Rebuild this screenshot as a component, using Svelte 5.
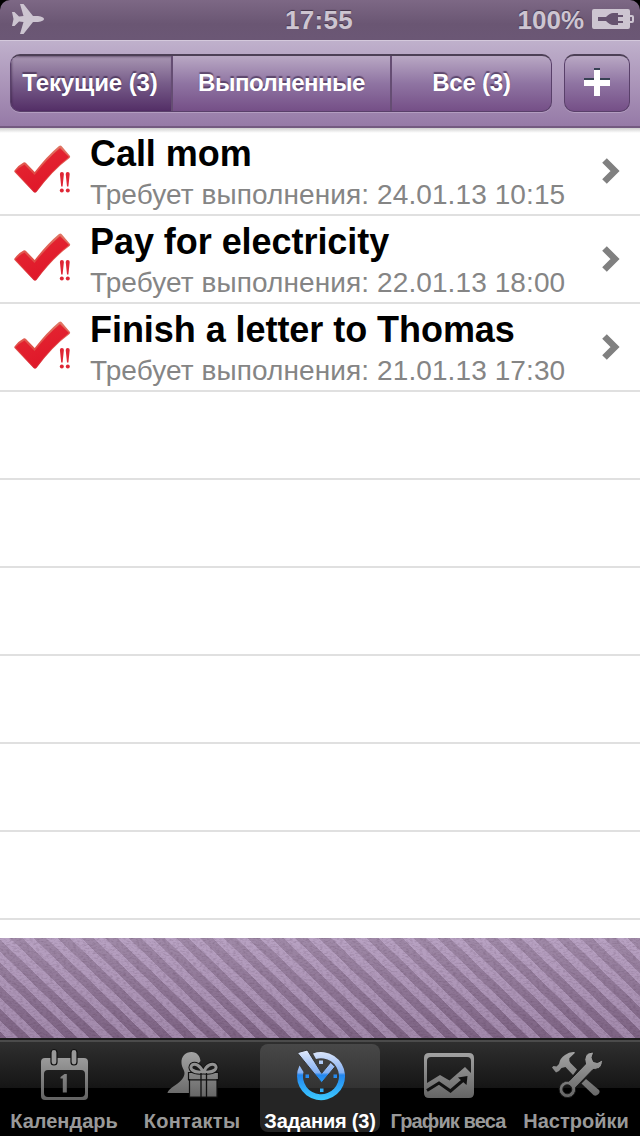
<script lang="ts">
  let filter = 0;
  let activeTab = 2;

  const filters = ['Текущие (3)', 'Выполненные', 'Все (3)'];

  const tasks = [
    { title: 'Call mom', due: '24.01.13 10:15' },
    { title: 'Pay for electricity', due: '22.01.13 18:00' },
    { title: 'Finish a letter to Thomas', due: '21.01.13 17:30' }
  ];

  const emptyRows = [1, 2, 3, 4, 5, 6];

  const tabs = [
    { id: 'calendar', label: 'Календарь' },
    { id: 'contacts', label: 'Контакты' },
    { id: 'tasks', label: 'Задания (3)' },
    { id: 'weight', label: 'График веса' },
    { id: 'settings', label: 'Настройки' }
  ];
</script>

<div class="screen">
  <header class="status">
    <svg class="plane" width="34" height="32" viewBox="0 0 34 32">
      <path d="M1 9h2.500l4.500 4.500 4.500-.5L9 1h3.500L22 13h5q6 .8 6 3t-6 3h-5L12.500 31H9l3.500-12-4.500-.5L3.500 23H1l1.500-7z" />
    </svg>
    <span class="time">17:55</span>
    <div class="power">
      <span class="percent">100%</span>
      <svg width="43" height="22" viewBox="0 0 43 22">
        <path class="cell" fill-rule="evenodd" d="M2 1h34q2 0 2 2v4h2q2 0 2 2v4q0 2-2 2h-2v4q0 2-2 2H2q-2 0-2-2V3q0-2 2-2zM38 9v4h2V9z" />
        <path class="plug" d="M6 9h8q4-4 7-4h5v2h5v2h-5v4h5v2h-5v2h-5q-3 0-7-4H6z" />
      </svg>
    </div>
  </header>

  <nav class="toolbar">
    <div class="segments">
      {#each filters as name, i}
        <button class="segment" class:selected={filter === i} on:click={() => (filter = i)}>{name}</button>
      {/each}
    </div>
    <button class="add" aria-label="Добавить">
      <svg width="28" height="30" viewBox="0 0 28 30">
        <path class="under" d="M11 0h6v10h10v6H1v-6h10z" />
        <path class="plus" d="M11 2h6v10h10v6H17v10h-6V18H1v-6h10z" />
      </svg>
    </button>
  </nav>

  <main class="list">
    {#each tasks as task}
      <div class="row">
        <svg class="check" width="90" height="86" viewBox="0 0 90 86">
          <defs>
            <linearGradient id="red" x1="0" y1="0" x2="0.5" y2="1">
              <stop offset="0" stop-color="#e5604f" />
              <stop offset="0.4" stop-color="#e3222f" />
              <stop offset="1" stop-color="#df1629" />
            </linearGradient>
            <linearGradient id="edge" x1="0" y1="0" x2="0" y2="1">
              <stop offset="0" stop-color="#e07866" />
              <stop offset="0.6" stop-color="#e04a45" />
              <stop offset="1" stop-color="#d8202f" />
            </linearGradient>
          </defs>
          <path fill="url(#edge)" d="M14.500 42.500q4-5.500 9-8 1.500-.5 2.500.5l8.700 9Q47 28 59 18q1.500-1 2.500 0l8.500 10q.5 1-.5 2Q53 42 36.500 64q-1.500 1.500-3 0L14.500 44q-.5-.8 0-1.500z" />
          <path fill="url(#red)" d="M15.500 43.500q4-4.500 9-7l10 10.500Q47 31 60 20l9 9Q52 42 35 64z" />
          <path class="mark" d="M59.900 46q0-2 2-2t2 2l-1.300 12.500h-1.400zM65.700 46q0-2 2-2t2 2l-1.300 12.500H67z" />
          <circle class="mark" cx="61.800" cy="62.500" r="2" />
          <circle class="mark" cx="67.800" cy="62.500" r="2" />
        </svg>
        <div class="text">
          <div class="title">{task.title}</div>
          <div class="due">Требует выполнения: {task.due}</div>
        </div>
        <svg class="chevron" width="20" height="28" viewBox="0 0 20 28">
          <path d="M3.500 3.500L14 14 3.500 24.500" />
        </svg>
      </div>
    {/each}
    {#each emptyRows as n}
      <div class="row"></div>
    {/each}
  </main>

  <div class="banner">
    <svg width="640" height="100">
      <defs>
        <filter id="grain" x="0" y="0" width="100%" height="100%" color-interpolation-filters="sRGB">
          <feTurbulence type="fractalNoise" baseFrequency="0.3 0.6" numOctaves="2" seed="4" />
          <feColorMatrix values="0 0 0 0 0.2  0 0 0 0 0.1  0 0 0 0 0.2  0.4 0 0 0 -0.17" />
        </filter>
      </defs>
      <rect width="640" height="100" filter="url(#grain)" />
    </svg>
  </div>

  <footer class="tabs">
    <svg class="defs" width="0" height="0">
      <defs>
        <linearGradient id="grey" gradientUnits="userSpaceOnUse" x1="0" y1="2" x2="0" y2="52">
          <stop offset="0" stop-color="#a6a6a6" />
          <stop offset="1" stop-color="#626262" />
        </linearGradient>
        <linearGradient id="blue" gradientUnits="userSpaceOnUse" x1="0" y1="2" x2="0" y2="52">
          <stop offset="0" stop-color="#e3eafb" />
          <stop offset="0.45" stop-color="#84b0f3" />
          <stop offset="0.5" stop-color="#2386ef" />
          <stop offset="1" stop-color="#3ccaff" />
        </linearGradient>
      </defs>
    </svg>
    {#each tabs as tab, i}
      <button class="tab" class:active={activeTab === i} on:click={() => (activeTab = i)}>
        <svg class="icon" width="56" height="56" viewBox="0 0 56 56">
          {#if tab.id === 'calendar'}
            <path fill="url(#grey)" fill-rule="evenodd" d="M9 10h39q4 0 4 4v34q0 4-4 4H9q-4 0-4-4V14q0-4 4-4zM12 22q-4 0-4 4v19q0 4 4 4h33q4 0 4-4V26q0-4-4-4z" />
            <rect class="ring" x="15" y="1.500" width="6" height="15.500" rx="3" />
            <rect class="ring" x="35" y="1.500" width="6" height="15.500" rx="3" />
            <path fill="url(#grey)" d="M24.500 29l4-3h2.300v18.500h-4V30.500h-2.300z" />
          {:else if tab.id === 'contacts'}
            <path fill="url(#grey)" d="M27.500 4c-6 0-10.500 4.500-10 11 .3 5 3 7 3 10 0 4-3 8-9 12-4 2.800-7.500 5-8 8h24V24l9-11C36 8 33 4 27.500 4z" />
            <path class="gift" d="M24.500 24.500h30v7h-1.500V49H25.500V31.500h-1z" />
            <path class="bow under-bow" d="M39 24c-3-7-8-9-11-7-3 3 0 8 11 7zM40 24c2-7 8-9 11-7 3 3 0 8-11 7z" />
            <path class="bow" d="M39 24c-3-7-8-9-11-7-3 3 0 8 11 7zM40 24c2-7 8-9 11-7 3 3 0 8-11 7z" />
            <path class="seam" d="M24 31.800h31M37 25v24M42.500 25v24" />
          {:else if tab.id === 'tasks'}
            <path fill="url(#blue)" d="M21 5.500A24 24 0 1 1 7.500 17.500L11.500 24A18 18 0 1 0 24 11z" />
            <path class="cut" fill="url(#blue)" d="M5.300 4.700L15.300 2l14.400 23.300 9-11 4.300 4.400-13.300 16z" />
            <path fill="url(#blue)" d="M27 12.500h4v3.500h-4zM13.500 26.500h3.500v3.500h-3.500zM41.500 26.500H45v3.500h-3.500zM28 40.500h3.500V44H28z" />
          {:else if tab.id === 'weight'}
            <path fill="url(#grey)" fill-rule="evenodd" d="M9 5h40q5 0 5 5v35q0 5-5 5H9q-5 0-5-5V10q0-5 5-5zM11 9q-4 0-4 4v22l13-8 9.500 5.500L45 19l6 6V13q0-4-4-4z" />
            <path class="graph" d="M7 42.500l12-7.500L30.500 43 44 31.500" />
            <path class="arrow" d="M38 29.500l9.500-1.500-1 9z" />
          {:else}
            <path fill="url(#grey)" d="M4 19.500l1.500-1.500 3 .5L11 16q1-6 6-9 4.500-3.500 9.500-3l.3 1-5.500 5.300q-.5 2.500 1.200 4.700l6.500 6.500-4 5.500-7.500-8-4 1-2.500 3-3 1.500z" />
            <path fill="url(#grey)" d="M33.500 35.500l4.500-4.500 13 11q1.500 2-.8 4.300t-4.500 1z" />
            <path class="tool" fill="url(#grey)" fill-rule="evenodd" d="M44.500 4l1 1-1.500 4.500 1.500 4 4 1 4-2.200 1 1Q54 19 50.500 20.500q-3 1.200-5.500 1L27.500 39.500a8.300 8.300 0 1 1-6.500-6.300L37.500 16q-1.500-5 0-8 2-4 7-4zM19.300 36.800a4.500 4.500 0 1 0 0 9a4.500 4.500 0 0 0 0-9z" />
          {/if}
        </svg>
        <span class="label {tab.id}">{tab.label}</span>
      </button>
    {/each}
  </footer>
</div>

<style>
  :global(body) {
    background: #000;
  }

  .screen {
    display: flex;
    flex-direction: column;
    width: 640px;
    height: 1136px;
    overflow: hidden;
    background: #000;
    font-family: 'Liberation Sans', Arial, sans-serif;
  }

  button {
    padding: 0;
    border: none;
    background: none;
    font-family: inherit;
    cursor: pointer;
  }

  svg {
    display: block;
    flex: none;
  }

  .status {
    display: grid;
    grid-template-columns: 1fr auto 1fr;
    align-items: center;
    box-sizing: border-box;
    height: 40px;
    padding: 0 5px 0 11px;
    border-radius: 10px 10px 0 0;
    background: linear-gradient(#7d6885, #6a5673 60%, #6b5775);
    color: #cdc5d1;
    font-size: 26px;
    font-weight: bold;
    text-shadow: 0 -1px 1px #43354a;
  }

  .plane {
    fill: #cdc5d1;
    margin-top: -2px;
  }

  .time {
    padding-right: 8px;
    letter-spacing: 0.3px;
  }

  .power {
    display: flex;
    justify-content: flex-end;
    align-items: center;
    gap: 8px;
  }

  .cell {
    fill: #cdc5d1;
  }

  .power svg {
    margin-top: -2px;
  }

  .plug {
    fill: #66536f;
  }

  .toolbar {
    display: flex;
    gap: 12px;
    box-sizing: border-box;
    height: 88px;
    padding: 14px 10px 14px;
    border-bottom: 2px solid #735a80;
    box-shadow: inset 0 1px #d4c9dc;
    background: linear-gradient(#c0b1cc, #967aa7);
  }

  .segments,
  .add {
    height: 58px;
    box-sizing: border-box;
    border: 1px solid #59406a;
    border-top: 2px solid #4d4056;
    border-radius: 10px;
    overflow: hidden;
    box-shadow: 0 1px 0 #b39dc0;
    background: linear-gradient(#b9a8c4, #8f74a2 50%, #754f87);
  }

  .segments {
    display: grid;
    grid-template-columns: 160px 219px 161px;
    width: 542px;
  }

  .segment {
    padding-bottom: 2px;
    border-left: 2px solid #654d73;
    color: #fff;
    font-size: 24px;
    font-weight: bold;
    letter-spacing: -0.2px;
    text-shadow: 0 -2px 1px rgba(50, 30, 65, 0.6);
    white-space: nowrap;
  }

  .segment:first-child {
    padding-right: 2px;
    border-left: none;
    letter-spacing: -0.1px;
  }

  .segment:nth-child(2) {
    letter-spacing: -0.5px;
  }

  .segment.selected {
    background: linear-gradient(#a896b2, #775c89 50%, #532e66);
    box-shadow: inset 1px 1px 2px rgba(50, 30, 60, 0.5);
  }

  .add {
    display: flex;
    align-items: center;
    justify-content: center;
    width: 66px;
  }

  .add svg {
    margin-top: -2px;
  }

  .plus {
    fill: #fff;
  }

  .under {
    fill: #374152;
  }

  .list {
    height: 810px;
    background: linear-gradient(#cfcfcf, #ececec 3px, #fff 5px);
  }

  .row {
    display: flex;
    box-sizing: border-box;
    height: 88px;
    border-bottom: 2px solid #e0e0e0;
  }

  .mark {
    fill: #df2635;
  }

  .text {
    flex: 1;
    white-space: nowrap;
  }

  .title {
    height: 49px;
    padding-top: 5px;
    box-sizing: border-box;
    color: #000;
    font-size: 36px;
    font-weight: bold;
    letter-spacing: -0.05px;
    line-height: 42px;
  }

  .due {
    color: #858585;
    font-size: 28px;
    letter-spacing: 0.1px;
    line-height: 36px;
  }

  .chevron {
    align-self: center;
    margin-right: 19px;
    fill: none;
    stroke: #808080;
    stroke-width: 6.500;
  }

  .banner {
    height: 100px;
    background:
      repeating-linear-gradient(
        44.1deg,
        transparent 0 4.4px,
        rgba(227, 205, 242, 0.36) 4.8px 12.4px,
        transparent 12.8px 16.53px
      ),
      linear-gradient(#a08aa8, #7d6383);
  }

  .tabs {
    display: flex;
    box-sizing: border-box;
    height: 98px;
    border-top: 2px solid #1b1b1b;
    box-shadow: inset 0 2px #4b4b4b;
    background: linear-gradient(#303030, #151515 48px, #000 48px);
  }

  .defs {
    position: absolute;
  }

  .tab {
    display: flex;
    flex-direction: column;
    align-items: center;
    box-sizing: border-box;
    width: 120px;
    height: 88px;
    margin: 4px 4px 0;
    padding-top: 4px;
    border-radius: 8px;
    color: #999;
  }

  .tab.active {
    background: linear-gradient(#484848, #333 44px, #252525 44px);
    color: #fff;
  }

  .label {
    margin-top: 5px;
    font-size: 20px;
    font-weight: bold;
    line-height: 24px;
    white-space: nowrap;
  }

  .label.contacts {
    letter-spacing: 0.3px;
  }

  .label.tasks {
    letter-spacing: -0.2px;
  }

  .label.weight {
    letter-spacing: -0.9px;
  }

  .ring {
    fill: #989898;
    stroke: #111;
    stroke-width: 1.2;
  }

  .gift {
    fill: url(#grey);
    stroke: #111;
    stroke-width: 1.2;
  }

  .bow {
    fill: #1b1b1b;
    stroke: #929292;
    stroke-width: 3;
  }

  .under-bow {
    stroke: #111;
    stroke-width: 5;
  }

  .seam {
    fill: none;
    stroke: #111;
    stroke-width: 1.3;
  }

  .cut {
    stroke: #353535;
    stroke-width: 1;
  }

  .graph {
    fill: none;
    stroke: #111;
    stroke-width: 3;
  }

  .arrow {
    fill: #111;
  }

  .tool {
    stroke: #1a1a1a;
    stroke-width: 1;
  }
</style>
